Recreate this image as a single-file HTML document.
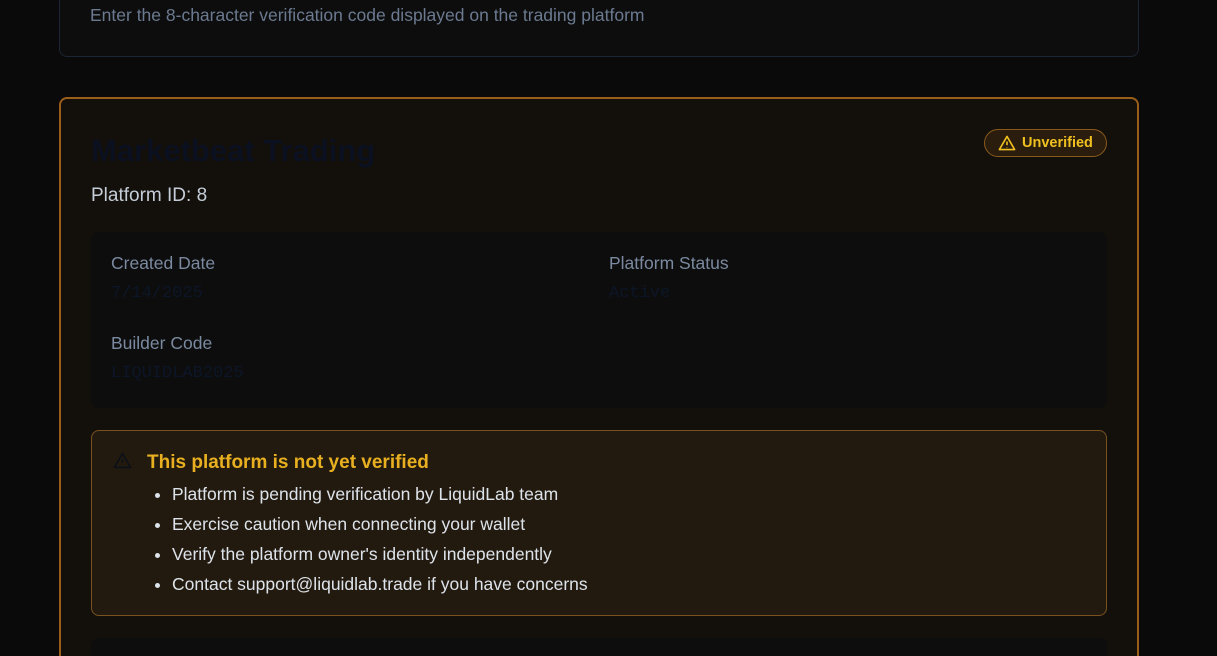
<!DOCTYPE html>
<html style="overflow:hidden;height:656px"><head><style>
*{box-sizing:border-box;margin:0;padding:0}
body{width:1217px;height:656px;overflow:hidden;background:#0a0a0a;font-family:"Liberation Sans",sans-serif;position:relative}
.top{position:absolute;left:59px;top:-20px;width:1080px;height:77px;background:#0d0d0d;border:1px solid #1c2533;border-radius:8px}
.top p{position:absolute;left:30px;top:24px;color:#6b7a90;font-size:17.5px}
.card{position:absolute;left:59px;top:97px;width:1080px;height:559px;background:#130f0b;border:2px solid #9a5d1a;border-bottom:none;border-radius:8px 8px 0 0;overflow:hidden}
h1{position:absolute;left:30px;top:34px;font-size:31px;font-weight:bold;color:#0b1120}
.pid{position:absolute;left:30px;top:86px;font-size:19px;color:#c4cdd8}
.badge{position:absolute;left:923px;top:30px;width:123px;height:28px;border:1px solid #8a5a1c;border-radius:14px;background:#2a1d0e;color:#f0c020;font-weight:bold;font-size:14.5px;display:flex;align-items:center;padding-left:13px;gap:6px}
.grid{position:absolute;left:30px;top:133px;width:1016px;height:176px;background:#0d0d0d;border-radius:8px}
.lab{position:absolute;color:#7b8aa0;font-size:17.5px}
.val{position:absolute;color:#0d1628;font-family:"Liberation Mono",monospace;font-size:17px}
.warn{position:absolute;left:30px;top:331px;width:1016px;height:186px;background:#231a0f;border:1px solid #7a5220;border-radius:8px}
.warn h3{position:absolute;left:55px;top:21px;color:#e8b020;font-size:19px;font-weight:bold}
.warn ul{position:absolute;left:80px;top:48px;color:#dde3ea;font-size:17.5px;line-height:30px}
.bot{position:absolute;left:30px;top:539px;width:1016px;height:40px;background:#0d0d0d;border-radius:8px 8px 0 0}
</style></head><body>
<div class="top"><p>Enter the 8-character verification code displayed on the trading platform</p></div>
<div class="card">
<h1>Marketbeat Trading</h1>
<div class="badge"><svg width="18" height="16" viewBox="0 0 24 22" fill="none" stroke="#f0c020" stroke-width="2.2" stroke-linejoin="round"><path d="M12 2L1.5 20h21z"/><path d="M12 9v5M12 17v.5"/></svg>Unverified</div>
<div class="pid">Platform ID: 8</div>
<div class="grid">
<div class="lab" style="left:20px;top:21px">Created Date</div>
<div class="val" style="left:20px;top:52px">7/14/2025</div>
<div class="lab" style="left:518px;top:21px">Platform Status</div>
<div class="val" style="left:518px;top:52px">Active</div>
<div class="lab" style="left:20px;top:101px">Builder Code</div>
<div class="val" style="left:20px;top:132px">LIQUIDLAB2025</div>
</div>
<div class="warn">
<svg style="position:absolute;left:21px;top:21px" width="19" height="17" viewBox="0 0 24 22" fill="none" stroke="#0b0f18" stroke-width="2" stroke-linejoin="round"><path d="M12 2L1.5 20h21z"/><path d="M12 9v5M12 17v.5"/></svg>
<h3>This platform is not yet verified</h3>
<ul><li>Platform is pending verification by LiquidLab team</li><li>Exercise caution when connecting your wallet</li><li>Verify the platform owner's identity independently</li><li>Contact support@liquidlab.trade if you have concerns</li></ul>
</div>
<div class="bot"></div>
</div>
</body></html>
